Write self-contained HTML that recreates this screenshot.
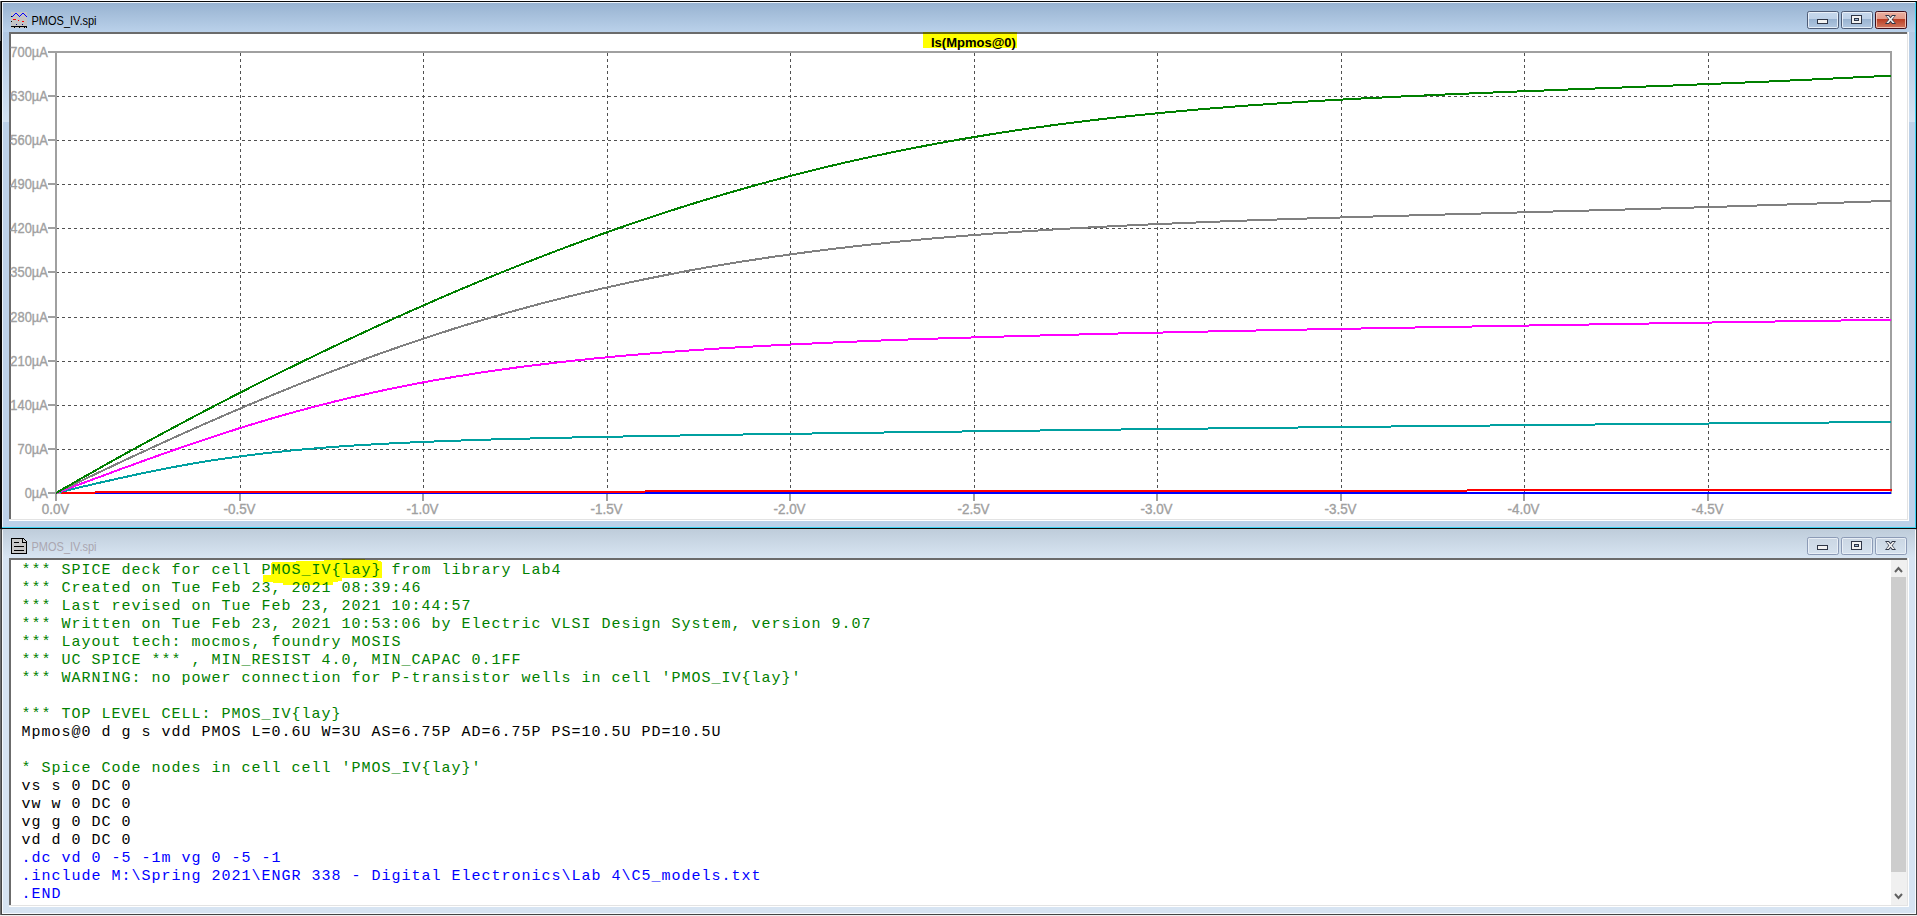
<!DOCTYPE html>
<html><head><meta charset="utf-8"><title>PMOS_IV.spi</title>
<style>
html,body{margin:0;padding:0;width:1917px;height:916px;overflow:hidden;background:#fff;}
svg{position:absolute;left:0;top:0;display:block;}
.ui{font-family:"Liberation Sans",sans-serif;}
.mono{font-family:"Liberation Mono",monospace;font-size:15px;letter-spacing:1px;white-space:pre;}
</style></head><body>

<svg width="1917" height="916" viewBox="0 0 1917 916">
<defs><linearGradient id="g1" x1="0" y1="0" x2="0" y2="1"><stop offset="0" stop-color="#98b3d1"/><stop offset="1" stop-color="#bad1ea"/></linearGradient><linearGradient id="g2" x1="0" y1="0" x2="0" y2="1"><stop offset="0" stop-color="#bfcddb"/><stop offset="1" stop-color="#d8e5f2"/></linearGradient><linearGradient id="bt1" x1="0" y1="0" x2="0" y2="1"><stop offset="0" stop-color="#c6d8ec"/><stop offset="0.44" stop-color="#bfd2e8"/><stop offset="0.45" stop-color="#98b2d0"/><stop offset="1" stop-color="#b4c9e2"/></linearGradient><linearGradient id="bc1" x1="0" y1="0" x2="0" y2="1"><stop offset="0" stop-color="#ebb0a2"/><stop offset="0.44" stop-color="#e39a88"/><stop offset="0.45" stop-color="#b93c22"/><stop offset="1" stop-color="#d27a62"/></linearGradient><linearGradient id="bt2" x1="0" y1="0" x2="0" y2="1"><stop offset="0" stop-color="#cad6e3"/><stop offset="1" stop-color="#d6e2ee"/></linearGradient><linearGradient id="gs" x1="0" y1="0" x2="0" y2="1"><stop offset="0" stop-color="#b2c9e3"/><stop offset="1" stop-color="#d3e2f2"/></linearGradient></defs>
<g shape-rendering="crispEdges">
<rect x="0" y="0" width="1917" height="916" fill="#ffffff"/>
<rect x="0" y="1" width="1917" height="528" fill="#0a0a0a"/>
<rect x="0" y="1" width="1" height="40" fill="#6a6a6a"/>
<rect x="2" y="2" width="1914" height="526" fill="#3cd2f2"/>
<rect x="2" y="2" width="1913" height="525" fill="#eef4fa"/>
<rect x="3" y="3" width="1912" height="524" fill="#bcd1e9"/>
<rect x="3" y="3" width="1912" height="29" fill="url(#g1)"/>
<rect x="3" y="32" width="6" height="90" fill="url(#gs)"/>
<rect x="1909" y="32" width="6" height="90" fill="url(#gs)"/>
<rect x="9" y="32" width="1900" height="489" fill="#ffffff"/>
<rect x="9" y="32" width="1899" height="488" fill="#e3e3e3"/>
<rect x="9" y="32" width="1898" height="487" fill="#6b6b6b"/>
<rect x="11" y="34" width="1896" height="485" fill="#ffffff"/>
<rect x="0" y="529" width="1917" height="387" fill="#f0f0f0"/>
<rect x="0" y="529" width="1917" height="386" fill="#454545"/>
<rect x="0" y="529" width="1" height="386" fill="#707070"/>
<rect x="2" y="530" width="1914" height="384" fill="#f7fafd"/>
<rect x="3" y="530" width="1912" height="383" fill="#d7e4f2"/>
<rect x="3" y="530" width="1912" height="28" fill="url(#g2)"/>
<rect x="2" y="529" width="1914" height="1" fill="#c2ced9"/>
<rect x="9" y="558" width="1900" height="349" fill="#ffffff"/>
<rect x="9" y="558" width="1899" height="348" fill="#e3e3e3"/>
<rect x="9" y="558" width="1898" height="347" fill="#6b6b6b"/>
<rect x="11" y="560" width="1896" height="345" fill="#ffffff"/>
<rect x="1891" y="560" width="16" height="345" fill="#f0f0f0"/>
<rect x="1891" y="577" width="15" height="295" fill="#cdcdcd"/>
</g>
<g shape-rendering="crispEdges">
<line x1="56" y1="96.5" x2="1890" y2="96.5" stroke="#505050" stroke-width="1" stroke-dasharray="3 3"/>
<line x1="56" y1="140.5" x2="1890" y2="140.5" stroke="#505050" stroke-width="1" stroke-dasharray="3 3"/>
<line x1="56" y1="184.5" x2="1890" y2="184.5" stroke="#505050" stroke-width="1" stroke-dasharray="3 3"/>
<line x1="56" y1="228.5" x2="1890" y2="228.5" stroke="#505050" stroke-width="1" stroke-dasharray="3 3"/>
<line x1="56" y1="272.5" x2="1890" y2="272.5" stroke="#505050" stroke-width="1" stroke-dasharray="3 3"/>
<line x1="56" y1="317.5" x2="1890" y2="317.5" stroke="#505050" stroke-width="1" stroke-dasharray="3 3"/>
<line x1="56" y1="361.5" x2="1890" y2="361.5" stroke="#505050" stroke-width="1" stroke-dasharray="3 3"/>
<line x1="56" y1="405.5" x2="1890" y2="405.5" stroke="#505050" stroke-width="1" stroke-dasharray="3 3"/>
<line x1="56" y1="449.5" x2="1890" y2="449.5" stroke="#505050" stroke-width="1" stroke-dasharray="3 3"/>
<line x1="240.5" y1="53" x2="240.5" y2="492" stroke="#505050" stroke-width="1" stroke-dasharray="3 3"/>
<line x1="423.5" y1="53" x2="423.5" y2="492" stroke="#505050" stroke-width="1" stroke-dasharray="3 3"/>
<line x1="607.5" y1="53" x2="607.5" y2="492" stroke="#505050" stroke-width="1" stroke-dasharray="3 3"/>
<line x1="790.5" y1="53" x2="790.5" y2="492" stroke="#505050" stroke-width="1" stroke-dasharray="3 3"/>
<line x1="974.5" y1="53" x2="974.5" y2="492" stroke="#505050" stroke-width="1" stroke-dasharray="3 3"/>
<line x1="1157.5" y1="53" x2="1157.5" y2="492" stroke="#505050" stroke-width="1" stroke-dasharray="3 3"/>
<line x1="1341.5" y1="53" x2="1341.5" y2="492" stroke="#505050" stroke-width="1" stroke-dasharray="3 3"/>
<line x1="1524.5" y1="53" x2="1524.5" y2="492" stroke="#505050" stroke-width="1" stroke-dasharray="3 3"/>
<line x1="1708.5" y1="53" x2="1708.5" y2="492" stroke="#505050" stroke-width="1" stroke-dasharray="3 3"/>
<rect x="55" y="51" width="2" height="450" fill="#a0a0a0"/>
<rect x="48" y="51" width="1844" height="2" fill="#a0a0a0"/>
<rect x="1890" y="51" width="2" height="443" fill="#a0a0a0"/>
<rect x="55" y="492" width="1837" height="2" fill="#a0a0a0"/>
<rect x="48" y="51" width="7" height="2" fill="#a0a0a0"/>
<rect x="48" y="95" width="7" height="2" fill="#a0a0a0"/>
<rect x="48" y="139" width="7" height="2" fill="#a0a0a0"/>
<rect x="48" y="183" width="7" height="2" fill="#a0a0a0"/>
<rect x="48" y="227" width="7" height="2" fill="#a0a0a0"/>
<rect x="48" y="271" width="7" height="2" fill="#a0a0a0"/>
<rect x="48" y="316" width="7" height="2" fill="#a0a0a0"/>
<rect x="48" y="360" width="7" height="2" fill="#a0a0a0"/>
<rect x="48" y="404" width="7" height="2" fill="#a0a0a0"/>
<rect x="48" y="448" width="7" height="2" fill="#a0a0a0"/>
<rect x="48" y="492" width="7" height="2" fill="#a0a0a0"/>
<rect x="239" y="494" width="2" height="7" fill="#a0a0a0"/>
<rect x="422" y="494" width="2" height="7" fill="#a0a0a0"/>
<rect x="606" y="494" width="2" height="7" fill="#a0a0a0"/>
<rect x="789" y="494" width="2" height="7" fill="#a0a0a0"/>
<rect x="973" y="494" width="2" height="7" fill="#a0a0a0"/>
<rect x="1156" y="494" width="2" height="7" fill="#a0a0a0"/>
<rect x="1340" y="494" width="2" height="7" fill="#a0a0a0"/>
<rect x="1523" y="494" width="2" height="7" fill="#a0a0a0"/>
<rect x="1707" y="494" width="2" height="7" fill="#a0a0a0"/>
</g>
<g class="ui" font-size="14" fill="#a0a0a0" stroke="#a0a0a0" stroke-width="0.35">
<text transform="translate(47.8,57) scale(0.92,1)" text-anchor="end">700µA</text>
<text transform="translate(47.8,101) scale(0.92,1)" text-anchor="end">630µA</text>
<text transform="translate(47.8,145) scale(0.92,1)" text-anchor="end">560µA</text>
<text transform="translate(47.8,189) scale(0.92,1)" text-anchor="end">490µA</text>
<text transform="translate(47.8,233) scale(0.92,1)" text-anchor="end">420µA</text>
<text transform="translate(47.8,277) scale(0.92,1)" text-anchor="end">350µA</text>
<text transform="translate(47.8,322) scale(0.92,1)" text-anchor="end">280µA</text>
<text transform="translate(47.8,366) scale(0.92,1)" text-anchor="end">210µA</text>
<text transform="translate(47.8,410) scale(0.92,1)" text-anchor="end">140µA</text>
<text transform="translate(47.8,454) scale(0.92,1)" text-anchor="end">70µA</text>
<text transform="translate(47.8,498) scale(0.92,1)" text-anchor="end">0µA</text>
<text transform="translate(55.5,514) scale(0.96,1)" text-anchor="middle">0.0V</text>
<text transform="translate(239.5,514) scale(0.96,1)" text-anchor="middle">-0.5V</text>
<text transform="translate(422.5,514) scale(0.96,1)" text-anchor="middle">-1.0V</text>
<text transform="translate(606.5,514) scale(0.96,1)" text-anchor="middle">-1.5V</text>
<text transform="translate(789.5,514) scale(0.96,1)" text-anchor="middle">-2.0V</text>
<text transform="translate(973.5,514) scale(0.96,1)" text-anchor="middle">-2.5V</text>
<text transform="translate(1156.5,514) scale(0.96,1)" text-anchor="middle">-3.0V</text>
<text transform="translate(1340.5,514) scale(0.96,1)" text-anchor="middle">-3.5V</text>
<text transform="translate(1523.5,514) scale(0.96,1)" text-anchor="middle">-4.0V</text>
<text transform="translate(1707.5,514) scale(0.96,1)" text-anchor="middle">-4.5V</text>
</g>
<rect x="923" y="32" width="94" height="16" fill="#ffff00"/>
<rect x="923" y="32" width="94" height="2" fill="#6b6b00"/>
<text class="ui" x="931" y="46.5" font-size="13" font-weight="bold" fill="#000">Is(Mpmos@0)</text>
<g shape-rendering="crispEdges">
<rect x="61" y="492" width="1830" height="2" fill="#0000ff"/>
<rect x="61" y="492" width="34" height="2" fill="#ff0000"/>
<rect x="95" y="491" width="550" height="2" fill="#ff0000"/>
<rect x="645" y="490" width="822" height="2" fill="#ff0000"/>
<rect x="1467" y="489" width="425" height="2" fill="#ff0000"/>
</g>
<polyline points="56,493.0 59,492.3 62,491.6 65,490.9 68,490.2 71,489.5 74,488.8 77,488.1 80,487.3 83,486.6 86,485.9 89,485.2 92,484.5 95,483.8 98,483.1 101,482.4 104,481.8 107,481.1 110,480.4 113,479.7 116,479.0 119,478.3 122,477.7 125,477.0 128,476.4 131,475.7 134,475.0 137,474.4 140,473.8 143,473.1 146,472.5 149,471.9 152,471.3 155,470.7 158,470.1 161,469.5 164,468.9 167,468.3 170,467.7 173,467.2 176,466.6 179,466.0 182,465.5 185,465.0 188,464.4 191,463.9 194,463.4 197,462.9 200,462.4 203,461.9 206,461.4 209,460.9 212,460.4 215,460.0 218,459.5 221,459.1 224,458.6 227,458.2 230,457.8 233,457.3 236,456.9 239,456.5 242,456.1 245,455.7 248,455.4 251,455.0 254,454.6 257,454.2 260,453.9 263,453.5 266,453.2 269,452.8 272,452.5 275,452.2 278,451.9 281,451.6 284,451.2 287,450.9 290,450.6 293,450.4 296,450.1 299,449.8 302,449.5 305,449.2 308,449.0 311,448.7 314,448.5 317,448.2 320,448.0 323,447.7 326,447.5 329,447.3 332,447.0 335,446.8 338,446.6 341,446.4 344,446.2 347,446.0 350,445.8 353,445.6 356,445.4 359,445.2 362,445.0 365,444.8 368,444.7 371,444.5 374,444.3 377,444.1 380,444.0 383,443.8 386,443.7 389,443.5 392,443.3 395,443.2 398,443.0 401,442.9 404,442.8 407,442.6 410,442.5 413,442.3 416,442.2 419,442.1 422,442.0 425,441.8 428,441.7 431,441.6 434,441.5 437,441.3 440,441.2 443,441.1 446,441.0 449,440.9 452,440.8 455,440.7 458,440.6 461,440.5 464,440.4 467,440.3 470,440.2 473,440.1 476,440.0 479,439.9 482,439.8 485,439.7 488,439.6 491,439.5 494,439.4 497,439.4 500,439.3 503,439.2 506,439.1 509,439.0 512,438.9 515,438.9 518,438.8 521,438.7 524,438.6 527,438.5 530,438.5 533,438.4 536,438.3 539,438.3 542,438.2 545,438.1 548,438.0 551,438.0 554,437.9 557,437.8 560,437.8 563,437.7 566,437.6 569,437.6 572,437.5 575,437.4 578,437.4 581,437.3 584,437.3 587,437.2 590,437.1 593,437.1 596,437.0 599,436.9 602,436.9 605,436.8 608,436.8 611,436.7 614,436.7 617,436.6 620,436.5 623,436.5 626,436.4 629,436.4 632,436.3 635,436.3 638,436.2 641,436.2 644,436.1 647,436.1 650,436.0 653,435.9 656,435.9 659,435.8 662,435.8 665,435.7 668,435.7 671,435.6 674,435.6 677,435.5 680,435.5 683,435.4 686,435.4 689,435.3 692,435.3 695,435.2 698,435.2 701,435.1 704,435.1 707,435.0 710,435.0 713,435.0 716,434.9 719,434.9 722,434.8 725,434.8 728,434.7 731,434.7 734,434.6 737,434.6 740,434.5 743,434.5 746,434.4 749,434.4 752,434.4 755,434.3 758,434.3 761,434.2 764,434.2 767,434.1 770,434.1 773,434.0 776,434.0 779,433.9 782,433.9 785,433.9 788,433.8 791,433.8 794,433.7 797,433.7 800,433.6 803,433.6 806,433.6 809,433.5 812,433.5 815,433.4 818,433.4 821,433.3 824,433.3 827,433.3 830,433.2 833,433.2 836,433.1 839,433.1 842,433.1 845,433.0 848,433.0 851,432.9 854,432.9 857,432.8 860,432.8 863,432.8 866,432.7 869,432.7 872,432.6 875,432.6 878,432.6 881,432.5 884,432.5 887,432.4 890,432.4 893,432.4 896,432.3 899,432.3 902,432.2 905,432.2 908,432.2 911,432.1 914,432.1 917,432.0 920,432.0 923,432.0 926,431.9 929,431.9 932,431.8 935,431.8 938,431.8 941,431.7 944,431.7 947,431.6 950,431.6 953,431.6 956,431.5 959,431.5 962,431.5 965,431.4 968,431.4 971,431.3 974,431.3 977,431.3 980,431.2 983,431.2 986,431.1 989,431.1 992,431.1 995,431.0 998,431.0 1001,431.0 1004,430.9 1007,430.9 1010,430.8 1013,430.8 1016,430.8 1019,430.7 1022,430.7 1025,430.7 1028,430.6 1031,430.6 1034,430.5 1037,430.5 1040,430.5 1043,430.4 1046,430.4 1049,430.4 1052,430.3 1055,430.3 1058,430.2 1061,430.2 1064,430.2 1067,430.1 1070,430.1 1073,430.1 1076,430.0 1079,430.0 1082,430.0 1085,429.9 1088,429.9 1091,429.8 1094,429.8 1097,429.8 1100,429.7 1103,429.7 1106,429.7 1109,429.6 1112,429.6 1115,429.6 1118,429.5 1121,429.5 1124,429.4 1127,429.4 1130,429.4 1133,429.3 1136,429.3 1139,429.3 1142,429.2 1145,429.2 1148,429.2 1151,429.1 1154,429.1 1157,429.1 1160,429.0 1163,429.0 1166,429.0 1169,428.9 1172,428.9 1175,428.9 1178,428.8 1181,428.8 1184,428.7 1187,428.7 1190,428.7 1193,428.6 1196,428.6 1199,428.6 1202,428.5 1205,428.5 1208,428.5 1211,428.4 1214,428.4 1217,428.4 1220,428.3 1223,428.3 1226,428.3 1229,428.2 1232,428.2 1235,428.2 1238,428.1 1241,428.1 1244,428.1 1247,428.0 1250,428.0 1253,428.0 1256,427.9 1259,427.9 1262,427.9 1265,427.8 1268,427.8 1271,427.8 1274,427.7 1277,427.7 1280,427.7 1283,427.6 1286,427.6 1289,427.6 1292,427.5 1295,427.5 1298,427.5 1301,427.4 1304,427.4 1307,427.4 1310,427.3 1313,427.3 1316,427.3 1319,427.2 1322,427.2 1325,427.2 1328,427.1 1331,427.1 1334,427.1 1337,427.0 1340,427.0 1343,427.0 1346,427.0 1349,426.9 1352,426.9 1355,426.9 1358,426.8 1361,426.8 1364,426.8 1367,426.7 1370,426.7 1373,426.7 1376,426.6 1379,426.6 1382,426.6 1385,426.5 1388,426.5 1391,426.5 1394,426.4 1397,426.4 1400,426.4 1403,426.4 1406,426.3 1409,426.3 1412,426.3 1415,426.2 1418,426.2 1421,426.2 1424,426.1 1427,426.1 1430,426.1 1433,426.0 1436,426.0 1439,426.0 1442,426.0 1445,425.9 1448,425.9 1451,425.9 1454,425.8 1457,425.8 1460,425.8 1463,425.7 1466,425.7 1469,425.7 1472,425.7 1475,425.6 1478,425.6 1481,425.6 1484,425.5 1487,425.5 1490,425.5 1493,425.4 1496,425.4 1499,425.4 1502,425.4 1505,425.3 1508,425.3 1511,425.3 1514,425.2 1517,425.2 1520,425.2 1523,425.2 1526,425.1 1529,425.1 1532,425.1 1535,425.0 1538,425.0 1541,425.0 1544,425.0 1547,424.9 1550,424.9 1553,424.9 1556,424.8 1559,424.8 1562,424.8 1565,424.8 1568,424.7 1571,424.7 1574,424.7 1577,424.6 1580,424.6 1583,424.6 1586,424.6 1589,424.5 1592,424.5 1595,424.5 1598,424.4 1601,424.4 1604,424.4 1607,424.4 1610,424.3 1613,424.3 1616,424.3 1619,424.3 1622,424.2 1625,424.2 1628,424.2 1631,424.1 1634,424.1 1637,424.1 1640,424.1 1643,424.0 1646,424.0 1649,424.0 1652,424.0 1655,423.9 1658,423.9 1661,423.9 1664,423.8 1667,423.8 1670,423.8 1673,423.8 1676,423.7 1679,423.7 1682,423.7 1685,423.7 1688,423.6 1691,423.6 1694,423.6 1697,423.6 1700,423.5 1703,423.5 1706,423.5 1709,423.5 1712,423.4 1715,423.4 1718,423.4 1721,423.4 1724,423.3 1727,423.3 1730,423.3 1733,423.2 1736,423.2 1739,423.2 1742,423.2 1745,423.1 1748,423.1 1751,423.1 1754,423.1 1757,423.0 1760,423.0 1763,423.0 1766,423.0 1769,422.9 1772,422.9 1775,422.9 1778,422.9 1781,422.8 1784,422.8 1787,422.8 1790,422.8 1793,422.7 1796,422.7 1799,422.7 1802,422.7 1805,422.6 1808,422.6 1811,422.6 1814,422.6 1817,422.6 1820,422.5 1823,422.5 1826,422.5 1829,422.5 1832,422.4 1835,422.4 1838,422.4 1841,422.4 1844,422.3 1847,422.3 1850,422.3 1853,422.3 1856,422.2 1859,422.2 1862,422.2 1865,422.2 1868,422.1 1871,422.1 1874,422.1 1877,422.1 1880,422.1 1883,422.0 1886,422.0 1889,422.0 1891,422.0" fill="none" stroke="#00a0a0" stroke-width="2" stroke-linejoin="round" shape-rendering="crispEdges"/>
<polyline points="56,493.0 59,491.9 62,490.8 65,489.7 68,488.6 71,487.5 74,486.3 77,485.2 80,484.1 83,483.0 86,481.9 89,480.8 92,479.7 95,478.6 98,477.5 101,476.4 104,475.3 107,474.2 110,473.0 113,471.9 116,470.8 119,469.7 122,468.6 125,467.5 128,466.5 131,465.4 134,464.3 137,463.2 140,462.1 143,461.0 146,459.9 149,458.9 152,457.8 155,456.7 158,455.7 161,454.6 164,453.5 167,452.5 170,451.4 173,450.4 176,449.3 179,448.3 182,447.2 185,446.2 188,445.2 191,444.2 194,443.1 197,442.1 200,441.1 203,440.1 206,439.1 209,438.1 212,437.1 215,436.1 218,435.1 221,434.2 224,433.2 227,432.2 230,431.3 233,430.3 236,429.4 239,428.4 242,427.5 245,426.6 248,425.6 251,424.7 254,423.8 257,422.9 260,422.0 263,421.1 266,420.2 269,419.3 272,418.4 275,417.6 278,416.7 281,415.8 284,415.0 287,414.1 290,413.3 293,412.5 296,411.6 299,410.8 302,410.0 305,409.2 308,408.4 311,407.6 314,406.8 317,406.0 320,405.2 323,404.5 326,403.7 329,402.9 332,402.2 335,401.4 338,400.7 341,400.0 344,399.3 347,398.5 350,397.8 353,397.1 356,396.4 359,395.7 362,395.0 365,394.4 368,393.7 371,393.0 374,392.3 377,391.7 380,391.0 383,390.4 386,389.8 389,389.1 392,388.5 395,387.9 398,387.3 401,386.7 404,386.1 407,385.5 410,384.9 413,384.3 416,383.7 419,383.2 422,382.6 425,382.0 428,381.5 431,380.9 434,380.4 437,379.9 440,379.3 443,378.8 446,378.3 449,377.8 452,377.2 455,376.7 458,376.2 461,375.8 464,375.3 467,374.8 470,374.3 473,373.8 476,373.4 479,372.9 482,372.4 485,372.0 488,371.5 491,371.1 494,370.7 497,370.2 500,369.8 503,369.4 506,369.0 509,368.6 512,368.1 515,367.7 518,367.3 521,366.9 524,366.5 527,366.2 530,365.8 533,365.4 536,365.0 539,364.7 542,364.3 545,363.9 548,363.6 551,363.2 554,362.9 557,362.5 560,362.2 563,361.8 566,361.5 569,361.2 572,360.8 575,360.5 578,360.2 581,359.9 584,359.6 587,359.3 590,359.0 593,358.6 596,358.4 599,358.1 602,357.8 605,357.5 608,357.2 611,356.9 614,356.6 617,356.3 620,356.1 623,355.8 626,355.5 629,355.3 632,355.0 635,354.7 638,354.5 641,354.2 644,354.0 647,353.7 650,353.5 653,353.3 656,353.0 659,352.8 662,352.5 665,352.3 668,352.1 671,351.9 674,351.6 677,351.4 680,351.2 683,351.0 686,350.8 689,350.5 692,350.3 695,350.1 698,349.9 701,349.7 704,349.5 707,349.3 710,349.1 713,348.9 716,348.7 719,348.5 722,348.3 725,348.2 728,348.0 731,347.8 734,347.6 737,347.4 740,347.3 743,347.1 746,346.9 749,346.7 752,346.6 755,346.4 758,346.2 761,346.1 764,345.9 767,345.7 770,345.6 773,345.4 776,345.2 779,345.1 782,344.9 785,344.8 788,344.6 791,344.5 794,344.3 797,344.2 800,344.0 803,343.9 806,343.8 809,343.6 812,343.5 815,343.3 818,343.2 821,343.1 824,342.9 827,342.8 830,342.6 833,342.5 836,342.4 839,342.3 842,342.1 845,342.0 848,341.9 851,341.7 854,341.6 857,341.5 860,341.4 863,341.3 866,341.1 869,341.0 872,340.9 875,340.8 878,340.7 881,340.5 884,340.4 887,340.3 890,340.2 893,340.1 896,340.0 899,339.9 902,339.8 905,339.7 908,339.5 911,339.4 914,339.3 917,339.2 920,339.1 923,339.0 926,338.9 929,338.8 932,338.7 935,338.6 938,338.5 941,338.4 944,338.3 947,338.2 950,338.1 953,338.0 956,337.9 959,337.8 962,337.7 965,337.6 968,337.5 971,337.5 974,337.4 977,337.3 980,337.2 983,337.1 986,337.0 989,336.9 992,336.8 995,336.7 998,336.6 1001,336.6 1004,336.5 1007,336.4 1010,336.3 1013,336.2 1016,336.1 1019,336.0 1022,336.0 1025,335.9 1028,335.8 1031,335.7 1034,335.6 1037,335.6 1040,335.5 1043,335.4 1046,335.3 1049,335.2 1052,335.2 1055,335.1 1058,335.0 1061,334.9 1064,334.8 1067,334.8 1070,334.7 1073,334.6 1076,334.5 1079,334.5 1082,334.4 1085,334.3 1088,334.2 1091,334.2 1094,334.1 1097,334.0 1100,333.9 1103,333.9 1106,333.8 1109,333.7 1112,333.7 1115,333.6 1118,333.5 1121,333.4 1124,333.4 1127,333.3 1130,333.2 1133,333.2 1136,333.1 1139,333.0 1142,332.9 1145,332.9 1148,332.8 1151,332.7 1154,332.7 1157,332.6 1160,332.5 1163,332.5 1166,332.4 1169,332.3 1172,332.3 1175,332.2 1178,332.1 1181,332.1 1184,332.0 1187,331.9 1190,331.9 1193,331.8 1196,331.7 1199,331.7 1202,331.6 1205,331.6 1208,331.5 1211,331.4 1214,331.4 1217,331.3 1220,331.2 1223,331.2 1226,331.1 1229,331.1 1232,331.0 1235,330.9 1238,330.9 1241,330.8 1244,330.7 1247,330.7 1250,330.6 1253,330.6 1256,330.5 1259,330.4 1262,330.4 1265,330.3 1268,330.3 1271,330.2 1274,330.1 1277,330.1 1280,330.0 1283,330.0 1286,329.9 1289,329.8 1292,329.8 1295,329.7 1298,329.7 1301,329.6 1304,329.5 1307,329.5 1310,329.4 1313,329.4 1316,329.3 1319,329.3 1322,329.2 1325,329.1 1328,329.1 1331,329.0 1334,329.0 1337,328.9 1340,328.9 1343,328.8 1346,328.7 1349,328.7 1352,328.6 1355,328.6 1358,328.5 1361,328.5 1364,328.4 1367,328.3 1370,328.3 1373,328.2 1376,328.2 1379,328.1 1382,328.1 1385,328.0 1388,328.0 1391,327.9 1394,327.9 1397,327.8 1400,327.7 1403,327.7 1406,327.6 1409,327.6 1412,327.5 1415,327.5 1418,327.4 1421,327.4 1424,327.3 1427,327.3 1430,327.2 1433,327.1 1436,327.1 1439,327.0 1442,327.0 1445,326.9 1448,326.9 1451,326.8 1454,326.8 1457,326.7 1460,326.7 1463,326.6 1466,326.6 1469,326.5 1472,326.5 1475,326.4 1478,326.4 1481,326.3 1484,326.2 1487,326.2 1490,326.1 1493,326.1 1496,326.0 1499,326.0 1502,325.9 1505,325.9 1508,325.8 1511,325.8 1514,325.7 1517,325.7 1520,325.6 1523,325.6 1526,325.5 1529,325.5 1532,325.4 1535,325.4 1538,325.3 1541,325.3 1544,325.2 1547,325.2 1550,325.1 1553,325.1 1556,325.0 1559,325.0 1562,324.9 1565,324.9 1568,324.8 1571,324.8 1574,324.7 1577,324.7 1580,324.6 1583,324.6 1586,324.5 1589,324.5 1592,324.4 1595,324.4 1598,324.3 1601,324.3 1604,324.2 1607,324.2 1610,324.1 1613,324.1 1616,324.0 1619,324.0 1622,323.9 1625,323.9 1628,323.8 1631,323.8 1634,323.7 1637,323.7 1640,323.6 1643,323.6 1646,323.5 1649,323.5 1652,323.4 1655,323.4 1658,323.3 1661,323.3 1664,323.2 1667,323.2 1670,323.1 1673,323.1 1676,323.0 1679,323.0 1682,322.9 1685,322.9 1688,322.8 1691,322.8 1694,322.7 1697,322.7 1700,322.7 1703,322.6 1706,322.6 1709,322.5 1712,322.5 1715,322.4 1718,322.4 1721,322.3 1724,322.3 1727,322.2 1730,322.2 1733,322.1 1736,322.1 1739,322.0 1742,322.0 1745,321.9 1748,321.9 1751,321.8 1754,321.8 1757,321.7 1760,321.7 1763,321.7 1766,321.6 1769,321.6 1772,321.5 1775,321.5 1778,321.4 1781,321.4 1784,321.3 1787,321.3 1790,321.2 1793,321.2 1796,321.1 1799,321.1 1802,321.0 1805,321.0 1808,321.0 1811,320.9 1814,320.9 1817,320.8 1820,320.8 1823,320.7 1826,320.7 1829,320.6 1832,320.6 1835,320.5 1838,320.5 1841,320.5 1844,320.4 1847,320.4 1850,320.3 1853,320.3 1856,320.2 1859,320.2 1862,320.1 1865,320.1 1868,320.0 1871,320.0 1874,319.9 1877,319.9 1880,319.9 1883,319.8 1886,319.8 1889,319.7 1891,319.7" fill="none" stroke="#ff00ff" stroke-width="2" stroke-linejoin="round" shape-rendering="crispEdges"/>
<polyline points="56,493.0 59,491.5 62,490.1 65,488.6 68,487.2 71,485.8 74,484.3 77,482.9 80,481.4 83,480.0 86,478.6 89,477.1 92,475.7 95,474.3 98,472.8 101,471.4 104,470.0 107,468.6 110,467.2 113,465.7 116,464.3 119,462.9 122,461.5 125,460.1 128,458.7 131,457.3 134,455.9 137,454.5 140,453.1 143,451.8 146,450.4 149,449.0 152,447.6 155,446.2 158,444.9 161,443.5 164,442.1 167,440.8 170,439.4 173,438.0 176,436.7 179,435.3 182,434.0 185,432.6 188,431.3 191,430.0 194,428.6 197,427.3 200,426.0 203,424.6 206,423.3 209,422.0 212,420.7 215,419.4 218,418.1 221,416.8 224,415.5 227,414.2 230,412.9 233,411.6 236,410.3 239,409.0 242,407.7 245,406.5 248,405.2 251,403.9 254,402.7 257,401.4 260,400.2 263,398.9 266,397.7 269,396.4 272,395.2 275,393.9 278,392.7 281,391.5 284,390.3 287,389.1 290,387.8 293,386.6 296,385.4 299,384.2 302,383.0 305,381.8 308,380.7 311,379.5 314,378.3 317,377.1 320,376.0 323,374.8 326,373.6 329,372.5 332,371.3 335,370.2 338,369.1 341,367.9 344,366.8 347,365.7 350,364.5 353,363.4 356,362.3 359,361.2 362,360.1 365,359.0 368,357.9 371,356.8 374,355.7 377,354.7 380,353.6 383,352.5 386,351.5 389,350.4 392,349.4 395,348.3 398,347.3 401,346.2 404,345.2 407,344.2 410,343.2 413,342.1 416,341.1 419,340.1 422,339.1 425,338.1 428,337.1 431,336.1 434,335.2 437,334.2 440,333.2 443,332.3 446,331.3 449,330.3 452,329.4 455,328.4 458,327.5 461,326.6 464,325.6 467,324.7 470,323.8 473,322.9 476,322.0 479,321.1 482,320.2 485,319.3 488,318.4 491,317.5 494,316.6 497,315.8 500,314.9 503,314.1 506,313.2 509,312.3 512,311.5 515,310.7 518,309.8 521,309.0 524,308.2 527,307.4 530,306.5 533,305.7 536,304.9 539,304.1 542,303.3 545,302.6 548,301.8 551,301.0 554,300.2 557,299.5 560,298.7 563,297.9 566,297.2 569,296.4 572,295.7 575,295.0 578,294.2 581,293.5 584,292.8 587,292.1 590,291.4 593,290.7 596,290.0 599,289.3 602,288.6 605,287.9 608,287.2 611,286.5 614,285.9 617,285.2 620,284.5 623,283.9 626,283.2 629,282.6 632,281.9 635,281.3 638,280.7 641,280.0 644,279.4 647,278.8 650,278.2 653,277.6 656,277.0 659,276.4 662,275.8 665,275.2 668,274.6 671,274.0 674,273.5 677,272.9 680,272.3 683,271.8 686,271.2 689,270.6 692,270.1 695,269.5 698,269.0 701,268.5 704,267.9 707,267.4 710,266.9 713,266.4 716,265.9 719,265.3 722,264.8 725,264.3 728,263.8 731,263.4 734,262.9 737,262.4 740,261.9 743,261.4 746,260.9 749,260.5 752,260.0 755,259.6 758,259.1 761,258.6 764,258.2 767,257.7 770,257.3 773,256.9 776,256.4 779,256.0 782,255.6 785,255.2 788,254.7 791,254.3 794,253.9 797,253.5 800,253.1 803,252.7 806,252.3 809,251.9 812,251.5 815,251.1 818,250.7 821,250.4 824,250.0 827,249.6 830,249.2 833,248.9 836,248.5 839,248.2 842,247.8 845,247.5 848,247.1 851,246.8 854,246.4 857,246.1 860,245.7 863,245.4 866,245.1 869,244.7 872,244.4 875,244.1 878,243.8 881,243.5 884,243.2 887,242.8 890,242.5 893,242.2 896,241.9 899,241.6 902,241.3 905,241.0 908,240.8 911,240.5 914,240.2 917,239.9 920,239.6 923,239.3 926,239.1 929,238.8 932,238.5 935,238.3 938,238.0 941,237.7 944,237.5 947,237.2 950,237.0 953,236.7 956,236.5 959,236.2 962,236.0 965,235.7 968,235.5 971,235.3 974,235.0 977,234.8 980,234.6 983,234.3 986,234.1 989,233.9 992,233.6 995,233.4 998,233.2 1001,233.0 1004,232.8 1007,232.6 1010,232.4 1013,232.1 1016,231.9 1019,231.7 1022,231.5 1025,231.3 1028,231.1 1031,230.9 1034,230.7 1037,230.6 1040,230.4 1043,230.2 1046,230.0 1049,229.8 1052,229.6 1055,229.4 1058,229.3 1061,229.1 1064,228.9 1067,228.7 1070,228.5 1073,228.4 1076,228.2 1079,228.0 1082,227.9 1085,227.7 1088,227.5 1091,227.4 1094,227.2 1097,227.0 1100,226.9 1103,226.7 1106,226.6 1109,226.4 1112,226.3 1115,226.1 1118,226.0 1121,225.8 1124,225.7 1127,225.5 1130,225.4 1133,225.2 1136,225.1 1139,224.9 1142,224.8 1145,224.7 1148,224.5 1151,224.4 1154,224.2 1157,224.1 1160,224.0 1163,223.8 1166,223.7 1169,223.6 1172,223.5 1175,223.3 1178,223.2 1181,223.1 1184,222.9 1187,222.8 1190,222.7 1193,222.6 1196,222.5 1199,222.3 1202,222.2 1205,222.1 1208,222.0 1211,221.9 1214,221.7 1217,221.6 1220,221.5 1223,221.4 1226,221.3 1229,221.2 1232,221.1 1235,221.0 1238,220.8 1241,220.7 1244,220.6 1247,220.5 1250,220.4 1253,220.3 1256,220.2 1259,220.1 1262,220.0 1265,219.9 1268,219.8 1271,219.7 1274,219.6 1277,219.5 1280,219.4 1283,219.3 1286,219.2 1289,219.1 1292,219.0 1295,218.9 1298,218.8 1301,218.7 1304,218.6 1307,218.5 1310,218.4 1313,218.3 1316,218.2 1319,218.1 1322,218.0 1325,217.9 1328,217.8 1331,217.7 1334,217.7 1337,217.6 1340,217.5 1343,217.4 1346,217.3 1349,217.2 1352,217.1 1355,217.0 1358,216.9 1361,216.8 1364,216.8 1367,216.7 1370,216.6 1373,216.5 1376,216.4 1379,216.3 1382,216.2 1385,216.1 1388,216.1 1391,216.0 1394,215.9 1397,215.8 1400,215.7 1403,215.6 1406,215.6 1409,215.5 1412,215.4 1415,215.3 1418,215.2 1421,215.1 1424,215.1 1427,215.0 1430,214.9 1433,214.8 1436,214.7 1439,214.6 1442,214.6 1445,214.5 1448,214.4 1451,214.3 1454,214.2 1457,214.1 1460,214.1 1463,214.0 1466,213.9 1469,213.8 1472,213.7 1475,213.7 1478,213.6 1481,213.5 1484,213.4 1487,213.3 1490,213.2 1493,213.2 1496,213.1 1499,213.0 1502,212.9 1505,212.8 1508,212.8 1511,212.7 1514,212.6 1517,212.5 1520,212.4 1523,212.3 1526,212.3 1529,212.2 1532,212.1 1535,212.0 1538,211.9 1541,211.9 1544,211.8 1547,211.7 1550,211.6 1553,211.5 1556,211.4 1559,211.4 1562,211.3 1565,211.2 1568,211.1 1571,211.0 1574,211.0 1577,210.9 1580,210.8 1583,210.7 1586,210.6 1589,210.5 1592,210.4 1595,210.4 1598,210.3 1601,210.2 1604,210.1 1607,210.0 1610,209.9 1613,209.9 1616,209.8 1619,209.7 1622,209.6 1625,209.5 1628,209.4 1631,209.3 1634,209.3 1637,209.2 1640,209.1 1643,209.0 1646,208.9 1649,208.8 1652,208.7 1655,208.6 1658,208.6 1661,208.5 1664,208.4 1667,208.3 1670,208.2 1673,208.1 1676,208.0 1679,207.9 1682,207.8 1685,207.8 1688,207.7 1691,207.6 1694,207.5 1697,207.4 1700,207.3 1703,207.2 1706,207.1 1709,207.0 1712,206.9 1715,206.8 1718,206.7 1721,206.6 1724,206.6 1727,206.5 1730,206.4 1733,206.3 1736,206.2 1739,206.1 1742,206.0 1745,205.9 1748,205.8 1751,205.7 1754,205.6 1757,205.5 1760,205.4 1763,205.3 1766,205.2 1769,205.1 1772,205.0 1775,204.9 1778,204.8 1781,204.7 1784,204.6 1787,204.5 1790,204.4 1793,204.3 1796,204.2 1799,204.1 1802,204.0 1805,203.9 1808,203.8 1811,203.7 1814,203.6 1817,203.5 1820,203.4 1823,203.3 1826,203.2 1829,203.0 1832,202.9 1835,202.8 1838,202.7 1841,202.6 1844,202.5 1847,202.4 1850,202.3 1853,202.2 1856,202.1 1859,202.0 1862,201.9 1865,201.7 1868,201.6 1871,201.5 1874,201.4 1877,201.3 1880,201.2 1883,201.1 1886,201.0 1889,200.8 1891,200.8" fill="none" stroke="#808080" stroke-width="2" stroke-linejoin="round" shape-rendering="crispEdges"/>
<polyline points="56,493.0 59,491.3 62,489.5 65,487.8 68,486.1 71,484.4 74,482.6 77,480.9 80,479.2 83,477.5 86,475.8 89,474.1 92,472.4 95,470.7 98,469.0 101,467.3 104,465.6 107,463.9 110,462.3 113,460.6 116,458.9 119,457.3 122,455.6 125,453.9 128,452.3 131,450.6 134,449.0 137,447.3 140,445.7 143,444.0 146,442.4 149,440.8 152,439.1 155,437.5 158,435.9 161,434.3 164,432.6 167,431.0 170,429.4 173,427.8 176,426.2 179,424.6 182,423.0 185,421.4 188,419.8 191,418.2 194,416.6 197,415.1 200,413.5 203,411.9 206,410.3 209,408.8 212,407.2 215,405.6 218,404.1 221,402.5 224,401.0 227,399.4 230,397.9 233,396.3 236,394.8 239,393.3 242,391.7 245,390.2 248,388.7 251,387.1 254,385.6 257,384.1 260,382.6 263,381.1 266,379.6 269,378.1 272,376.6 275,375.1 278,373.6 281,372.1 284,370.6 287,369.1 290,367.7 293,366.2 296,364.7 299,363.2 302,361.8 305,360.3 308,358.9 311,357.4 314,355.9 317,354.5 320,353.1 323,351.6 326,350.2 329,348.7 332,347.3 335,345.9 338,344.5 341,343.0 344,341.6 347,340.2 350,338.8 353,337.4 356,336.0 359,334.6 362,333.2 365,331.8 368,330.4 371,329.0 374,327.6 377,326.3 380,324.9 383,323.5 386,322.2 389,320.8 392,319.4 395,318.1 398,316.7 401,315.4 404,314.0 407,312.7 410,311.3 413,310.0 416,308.7 419,307.4 422,306.0 425,304.7 428,303.4 431,302.1 434,300.8 437,299.5 440,298.2 443,296.9 446,295.6 449,294.3 452,293.0 455,291.7 458,290.5 461,289.2 464,287.9 467,286.7 470,285.4 473,284.1 476,282.9 479,281.6 482,280.4 485,279.2 488,277.9 491,276.7 494,275.5 497,274.2 500,273.0 503,271.8 506,270.6 509,269.4 512,268.2 515,267.0 518,265.8 521,264.6 524,263.4 527,262.2 530,261.0 533,259.9 536,258.7 539,257.5 542,256.4 545,255.2 548,254.1 551,252.9 554,251.8 557,250.6 560,249.5 563,248.4 566,247.2 569,246.1 572,245.0 575,243.9 578,242.8 581,241.7 584,240.6 587,239.5 590,238.4 593,237.3 596,236.2 599,235.1 602,234.0 605,233.0 608,231.9 611,230.9 614,229.8 617,228.7 620,227.7 623,226.7 626,225.6 629,224.6 632,223.6 635,222.5 638,221.5 641,220.5 644,219.5 647,218.5 650,217.5 653,216.5 656,215.5 659,214.5 662,213.5 665,212.6 668,211.6 671,210.6 674,209.7 677,208.7 680,207.7 683,206.8 686,205.9 689,204.9 692,204.0 695,203.0 698,202.1 701,201.2 704,200.3 707,199.4 710,198.5 713,197.6 716,196.7 719,195.8 722,194.9 725,194.0 728,193.1 731,192.3 734,191.4 737,190.5 740,189.7 743,188.8 746,188.0 749,187.1 752,186.3 755,185.4 758,184.6 761,183.8 764,183.0 767,182.2 770,181.3 773,180.5 776,179.7 779,178.9 782,178.1 785,177.4 788,176.6 791,175.8 794,175.0 797,174.3 800,173.5 803,172.7 806,172.0 809,171.2 812,170.5 815,169.7 818,169.0 821,168.3 824,167.6 827,166.8 830,166.1 833,165.4 836,164.7 839,164.0 842,163.3 845,162.6 848,161.9 851,161.2 854,160.6 857,159.9 860,159.2 863,158.6 866,157.9 869,157.2 872,156.6 875,155.9 878,155.3 881,154.7 884,154.0 887,153.4 890,152.8 893,152.1 896,151.5 899,150.9 902,150.3 905,149.7 908,149.1 911,148.5 914,147.9 917,147.4 920,146.8 923,146.2 926,145.6 929,145.1 932,144.5 935,143.9 938,143.4 941,142.8 944,142.3 947,141.7 950,141.2 953,140.7 956,140.1 959,139.6 962,139.1 965,138.6 968,138.1 971,137.6 974,137.1 977,136.6 980,136.1 983,135.6 986,135.1 989,134.6 992,134.1 995,133.7 998,133.2 1001,132.7 1004,132.2 1007,131.8 1010,131.3 1013,130.9 1016,130.4 1019,130.0 1022,129.5 1025,129.1 1028,128.7 1031,128.2 1034,127.8 1037,127.4 1040,127.0 1043,126.6 1046,126.2 1049,125.7 1052,125.3 1055,124.9 1058,124.5 1061,124.1 1064,123.8 1067,123.4 1070,123.0 1073,122.6 1076,122.2 1079,121.9 1082,121.5 1085,121.1 1088,120.8 1091,120.4 1094,120.0 1097,119.7 1100,119.3 1103,119.0 1106,118.6 1109,118.3 1112,118.0 1115,117.6 1118,117.3 1121,117.0 1124,116.7 1127,116.3 1130,116.0 1133,115.7 1136,115.4 1139,115.1 1142,114.8 1145,114.5 1148,114.2 1151,113.9 1154,113.6 1157,113.3 1160,113.0 1163,112.7 1166,112.4 1169,112.1 1172,111.8 1175,111.6 1178,111.3 1181,111.0 1184,110.7 1187,110.5 1190,110.2 1193,110.0 1196,109.7 1199,109.4 1202,109.2 1205,108.9 1208,108.7 1211,108.4 1214,108.2 1217,107.9 1220,107.7 1223,107.5 1226,107.2 1229,107.0 1232,106.8 1235,106.5 1238,106.3 1241,106.1 1244,105.9 1247,105.6 1250,105.4 1253,105.2 1256,105.0 1259,104.8 1262,104.6 1265,104.3 1268,104.1 1271,103.9 1274,103.7 1277,103.5 1280,103.3 1283,103.1 1286,102.9 1289,102.7 1292,102.5 1295,102.4 1298,102.2 1301,102.0 1304,101.8 1307,101.6 1310,101.4 1313,101.2 1316,101.1 1319,100.9 1322,100.7 1325,100.5 1328,100.4 1331,100.2 1334,100.0 1337,99.8 1340,99.7 1343,99.5 1346,99.3 1349,99.2 1352,99.0 1355,98.9 1358,98.7 1361,98.5 1364,98.4 1367,98.2 1370,98.1 1373,97.9 1376,97.8 1379,97.6 1382,97.5 1385,97.3 1388,97.2 1391,97.0 1394,96.9 1397,96.7 1400,96.6 1403,96.4 1406,96.3 1409,96.1 1412,96.0 1415,95.9 1418,95.7 1421,95.6 1424,95.5 1427,95.3 1430,95.2 1433,95.0 1436,94.9 1439,94.8 1442,94.6 1445,94.5 1448,94.4 1451,94.2 1454,94.1 1457,94.0 1460,93.9 1463,93.7 1466,93.6 1469,93.5 1472,93.4 1475,93.2 1478,93.1 1481,93.0 1484,92.9 1487,92.7 1490,92.6 1493,92.5 1496,92.4 1499,92.2 1502,92.1 1505,92.0 1508,91.9 1511,91.8 1514,91.6 1517,91.5 1520,91.4 1523,91.3 1526,91.2 1529,91.0 1532,90.9 1535,90.8 1538,90.7 1541,90.6 1544,90.5 1547,90.3 1550,90.2 1553,90.1 1556,90.0 1559,89.9 1562,89.8 1565,89.6 1568,89.5 1571,89.4 1574,89.3 1577,89.2 1580,89.1 1583,89.0 1586,88.8 1589,88.7 1592,88.6 1595,88.5 1598,88.4 1601,88.3 1604,88.1 1607,88.0 1610,87.9 1613,87.8 1616,87.7 1619,87.6 1622,87.5 1625,87.3 1628,87.2 1631,87.1 1634,87.0 1637,86.9 1640,86.8 1643,86.6 1646,86.5 1649,86.4 1652,86.3 1655,86.2 1658,86.1 1661,85.9 1664,85.8 1667,85.7 1670,85.6 1673,85.5 1676,85.3 1679,85.2 1682,85.1 1685,85.0 1688,84.9 1691,84.7 1694,84.6 1697,84.5 1700,84.4 1703,84.3 1706,84.1 1709,84.0 1712,83.9 1715,83.8 1718,83.6 1721,83.5 1724,83.4 1727,83.3 1730,83.1 1733,83.0 1736,82.9 1739,82.8 1742,82.6 1745,82.5 1748,82.4 1751,82.2 1754,82.1 1757,82.0 1760,81.9 1763,81.7 1766,81.6 1769,81.5 1772,81.3 1775,81.2 1778,81.1 1781,80.9 1784,80.8 1787,80.7 1790,80.5 1793,80.4 1796,80.2 1799,80.1 1802,80.0 1805,79.8 1808,79.7 1811,79.6 1814,79.4 1817,79.3 1820,79.1 1823,79.0 1826,78.8 1829,78.7 1832,78.6 1835,78.4 1838,78.3 1841,78.1 1844,78.0 1847,77.8 1850,77.7 1853,77.5 1856,77.4 1859,77.2 1862,77.1 1865,76.9 1868,76.8 1871,76.6 1874,76.5 1877,76.3 1880,76.1 1883,76.0 1886,75.8 1889,75.7 1891,75.6" fill="none" stroke="#008000" stroke-width="2" stroke-linejoin="round" shape-rendering="crispEdges"/>
<rect x="1807.5" y="11.5" width="31" height="17" rx="1.8" ry="1.8" fill="url(#bt1)" stroke="#4e5c76" stroke-width="1"/><rect x="1808.5" y="12.5" width="29" height="15" rx="1" ry="1" fill="none" stroke="#eef4fb" stroke-opacity="0.85" stroke-width="1"/><g shape-rendering="crispEdges"><rect x="1817" y="19" width="11" height="5" fill="#2f3646"/><rect x="1818" y="20" width="9" height="3" fill="#f2f2f2"/></g>
<rect x="1841.5" y="11.5" width="31" height="17" rx="1.8" ry="1.8" fill="url(#bt1)" stroke="#4e5c76" stroke-width="1"/><rect x="1842.5" y="12.5" width="29" height="15" rx="1" ry="1" fill="none" stroke="#eef4fb" stroke-opacity="0.85" stroke-width="1"/><g shape-rendering="crispEdges"><rect x="1851" y="15" width="11" height="9" fill="#2f3646"/><rect x="1852" y="16" width="9" height="7" fill="#f2f2f2"/><rect x="1854" y="18" width="5" height="3" fill="#2f3646"/><rect x="1855" y="19" width="3" height="1" fill="#9fb9d6"/></g>
<rect x="1875.5" y="11.5" width="31" height="17" rx="1.8" ry="1.8" fill="url(#bc1)" stroke="#3e0d1a" stroke-width="1"/><rect x="1876.5" y="12.5" width="29" height="15" rx="1" ry="1" fill="none" stroke="#f6cfc3" stroke-opacity="0.85" stroke-width="1"/><polygon points="1885.00,15.00 1889.00,15.00 1896.00,24.00 1892.00,24.00" fill="#2f3646"/><polygon points="1892.00,15.00 1896.00,15.00 1889.00,24.00 1885.00,24.00" fill="#2f3646"/><polygon points="1886.30,16.00 1888.50,16.00 1894.70,23.00 1892.50,23.00" fill="#f4f4f4"/><polygon points="1892.50,16.00 1894.70,16.00 1888.50,23.00 1886.30,23.00" fill="#f4f4f4"/><g shape-rendering="crispEdges"></g>
<rect x="1807.5" y="537.5" width="31" height="17" rx="1.8" ry="1.8" fill="url(#bt2)" stroke="#8c9bb6" stroke-width="1"/><rect x="1808.5" y="538.5" width="29" height="15" rx="1" ry="1" fill="none" stroke="#edf2f8" stroke-opacity="0.85" stroke-width="1"/><g shape-rendering="crispEdges"><rect x="1817" y="545" width="11" height="5" fill="#2f3646"/><rect x="1818" y="546" width="9" height="3" fill="#f2f2f2"/></g>
<rect x="1841.5" y="537.5" width="31" height="17" rx="1.8" ry="1.8" fill="url(#bt2)" stroke="#8c9bb6" stroke-width="1"/><rect x="1842.5" y="538.5" width="29" height="15" rx="1" ry="1" fill="none" stroke="#edf2f8" stroke-opacity="0.85" stroke-width="1"/><g shape-rendering="crispEdges"><rect x="1851" y="541" width="11" height="9" fill="#2f3646"/><rect x="1852" y="542" width="9" height="7" fill="#f2f2f2"/><rect x="1854" y="544" width="5" height="3" fill="#2f3646"/><rect x="1855" y="545" width="3" height="1" fill="#9fb9d6"/></g>
<rect x="1875.5" y="537.5" width="31" height="17" rx="1.8" ry="1.8" fill="url(#bt2)" stroke="#8c9bb6" stroke-width="1"/><rect x="1876.5" y="538.5" width="29" height="15" rx="1" ry="1" fill="none" stroke="#edf2f8" stroke-opacity="0.85" stroke-width="1"/><polygon points="1885.00,541.00 1889.00,541.00 1896.00,550.00 1892.00,550.00" fill="#2f3646"/><polygon points="1892.00,541.00 1896.00,541.00 1889.00,550.00 1885.00,550.00" fill="#2f3646"/><polygon points="1886.30,542.00 1888.50,542.00 1894.70,549.00 1892.50,549.00" fill="#f4f4f4"/><polygon points="1892.50,542.00 1894.70,542.00 1888.50,549.00 1886.30,549.00" fill="#f4f4f4"/><g shape-rendering="crispEdges"></g>
<g shape-rendering="crispEdges"><rect x="11" y="12" width="16" height="16" fill="#c4c4c4"/><rect x="12" y="16" width="1" height="1" fill="#0000ff"/><rect x="13" y="15" width="1" height="1" fill="#0000ff"/><rect x="14" y="14" width="1" height="1" fill="#0000ff"/><rect x="15" y="13" width="1" height="1" fill="#0000ff"/><rect x="16" y="13" width="1" height="1" fill="#0000ff"/><rect x="17" y="14" width="1" height="1" fill="#0000ff"/><rect x="18" y="15" width="1" height="1" fill="#0000ff"/><rect x="19" y="16" width="1" height="1" fill="#0000ff"/><rect x="20" y="15" width="1" height="1" fill="#0000ff"/><rect x="21" y="14" width="1" height="1" fill="#0000ff"/><rect x="22" y="13" width="1" height="1" fill="#0000ff"/><rect x="23" y="13" width="1" height="1" fill="#0000ff"/><rect x="24" y="14" width="1" height="1" fill="#0000ff"/><rect x="25" y="15" width="1" height="1" fill="#0000ff"/><rect x="26" y="16" width="1" height="1" fill="#0000ff"/><rect x="11" y="16" width="1" height="1" fill="#000"/><rect x="13" y="19" width="3" height="1" fill="#ff0000"/><rect x="18" y="20" width="1" height="1" fill="#ff0000"/><rect x="22" y="21" width="2" height="1" fill="#ff0000"/><rect x="11" y="21" width="1" height="1" fill="#000"/><rect x="16" y="24" width="1" height="1" fill="#000080"/><rect x="22" y="24" width="1" height="1" fill="#000080"/><rect x="11" y="26" width="16" height="1" fill="#000"/><rect x="14" y="27" width="1" height="1" fill="#000"/><rect x="19" y="27" width="1" height="1" fill="#000"/><rect x="24" y="27" width="1" height="1" fill="#000"/><rect x="26" y="27" width="1" height="1" fill="#000"/><path d="M11,538 H23 L27,542 V554 H11 Z" fill="#000"/><path d="M12,539 H22 V543 H26 V553 H12 Z" fill="#c8c8c8"/><path d="M23,539 L26,542 H23 Z" fill="#d0d0d0"/><rect x="14" y="542" width="5" height="1" fill="#000"/><rect x="14" y="546" width="10" height="1" fill="#000"/><rect x="14" y="550" width="10" height="1" fill="#000"/></g>
<text class="ui" x="31.5" y="25" font-size="12" fill="#000" textLength="65" lengthAdjust="spacingAndGlyphs">PMOS_IV.spi</text>
<text class="ui" x="31.5" y="551" font-size="12" fill="#aaa6b0" textLength="65" lengthAdjust="spacingAndGlyphs">PMOS_IV.spi</text>
<path d="M1895,572 L1898.5,568 L1902,572" fill="none" stroke="#606060" stroke-width="2"/>
<path d="M1895,894 L1898.5,898 L1902,894" fill="none" stroke="#606060" stroke-width="2"/>
<g shape-rendering="crispEdges">
<polygon points="272,562 319,561 328,560 376,560 382,562 382,578 342,578 342,581 333,582 333,584.5 283,584.5 283,583 273,583 273,582 263,582 263,574.5 271,574.5 271,563" fill="#ffff00"/>
<rect x="342" y="559" width="23" height="1" fill="#6b6b00"/>
</g>
<g class="mono">
<text x="21.5" y="574" fill="#008000" xml:space="preserve">*** SPICE deck for cell PMOS_IV{lay} from library Lab4</text>
<text x="21.5" y="592" fill="#008000" xml:space="preserve">*** Created on Tue Feb 23, 2021 08:39:46</text>
<text x="21.5" y="610" fill="#008000" xml:space="preserve">*** Last revised on Tue Feb 23, 2021 10:44:57</text>
<text x="21.5" y="628" fill="#008000" xml:space="preserve">*** Written on Tue Feb 23, 2021 10:53:06 by Electric VLSI Design System, version 9.07</text>
<text x="21.5" y="646" fill="#008000" xml:space="preserve">*** Layout tech: mocmos, foundry MOSIS</text>
<text x="21.5" y="664" fill="#008000" xml:space="preserve">*** UC SPICE *** , MIN_RESIST 4.0, MIN_CAPAC 0.1FF</text>
<text x="21.5" y="682" fill="#008000" xml:space="preserve">*** WARNING: no power connection for P-transistor wells in cell &#x27;PMOS_IV{lay}&#x27;</text>
<text x="21.5" y="718" fill="#008000" xml:space="preserve">*** TOP LEVEL CELL: PMOS_IV{lay}</text>
<text x="21.5" y="736" fill="#000000" xml:space="preserve">Mpmos@0 d g s vdd PMOS L=0.6U W=3U AS=6.75P AD=6.75P PS=10.5U PD=10.5U</text>
<text x="21.5" y="772" fill="#008000" xml:space="preserve">* Spice Code nodes in cell cell &#x27;PMOS_IV{lay}&#x27;</text>
<text x="21.5" y="790" fill="#000000" xml:space="preserve">vs s 0 DC 0</text>
<text x="21.5" y="808" fill="#000000" xml:space="preserve">vw w 0 DC 0</text>
<text x="21.5" y="826" fill="#000000" xml:space="preserve">vg g 0 DC 0</text>
<text x="21.5" y="844" fill="#000000" xml:space="preserve">vd d 0 DC 0</text>
<text x="21.5" y="862" fill="#0000ff" xml:space="preserve">.dc vd 0 -5 -1m vg 0 -5 -1</text>
<text x="21.5" y="880" fill="#0000ff" xml:space="preserve">.include M:\Spring 2021\ENGR 338 - Digital Electronics\Lab 4\C5_models.txt</text>
<text x="21.5" y="898" fill="#0000ff" xml:space="preserve">.END</text>
</g>
</svg>
</body></html>
